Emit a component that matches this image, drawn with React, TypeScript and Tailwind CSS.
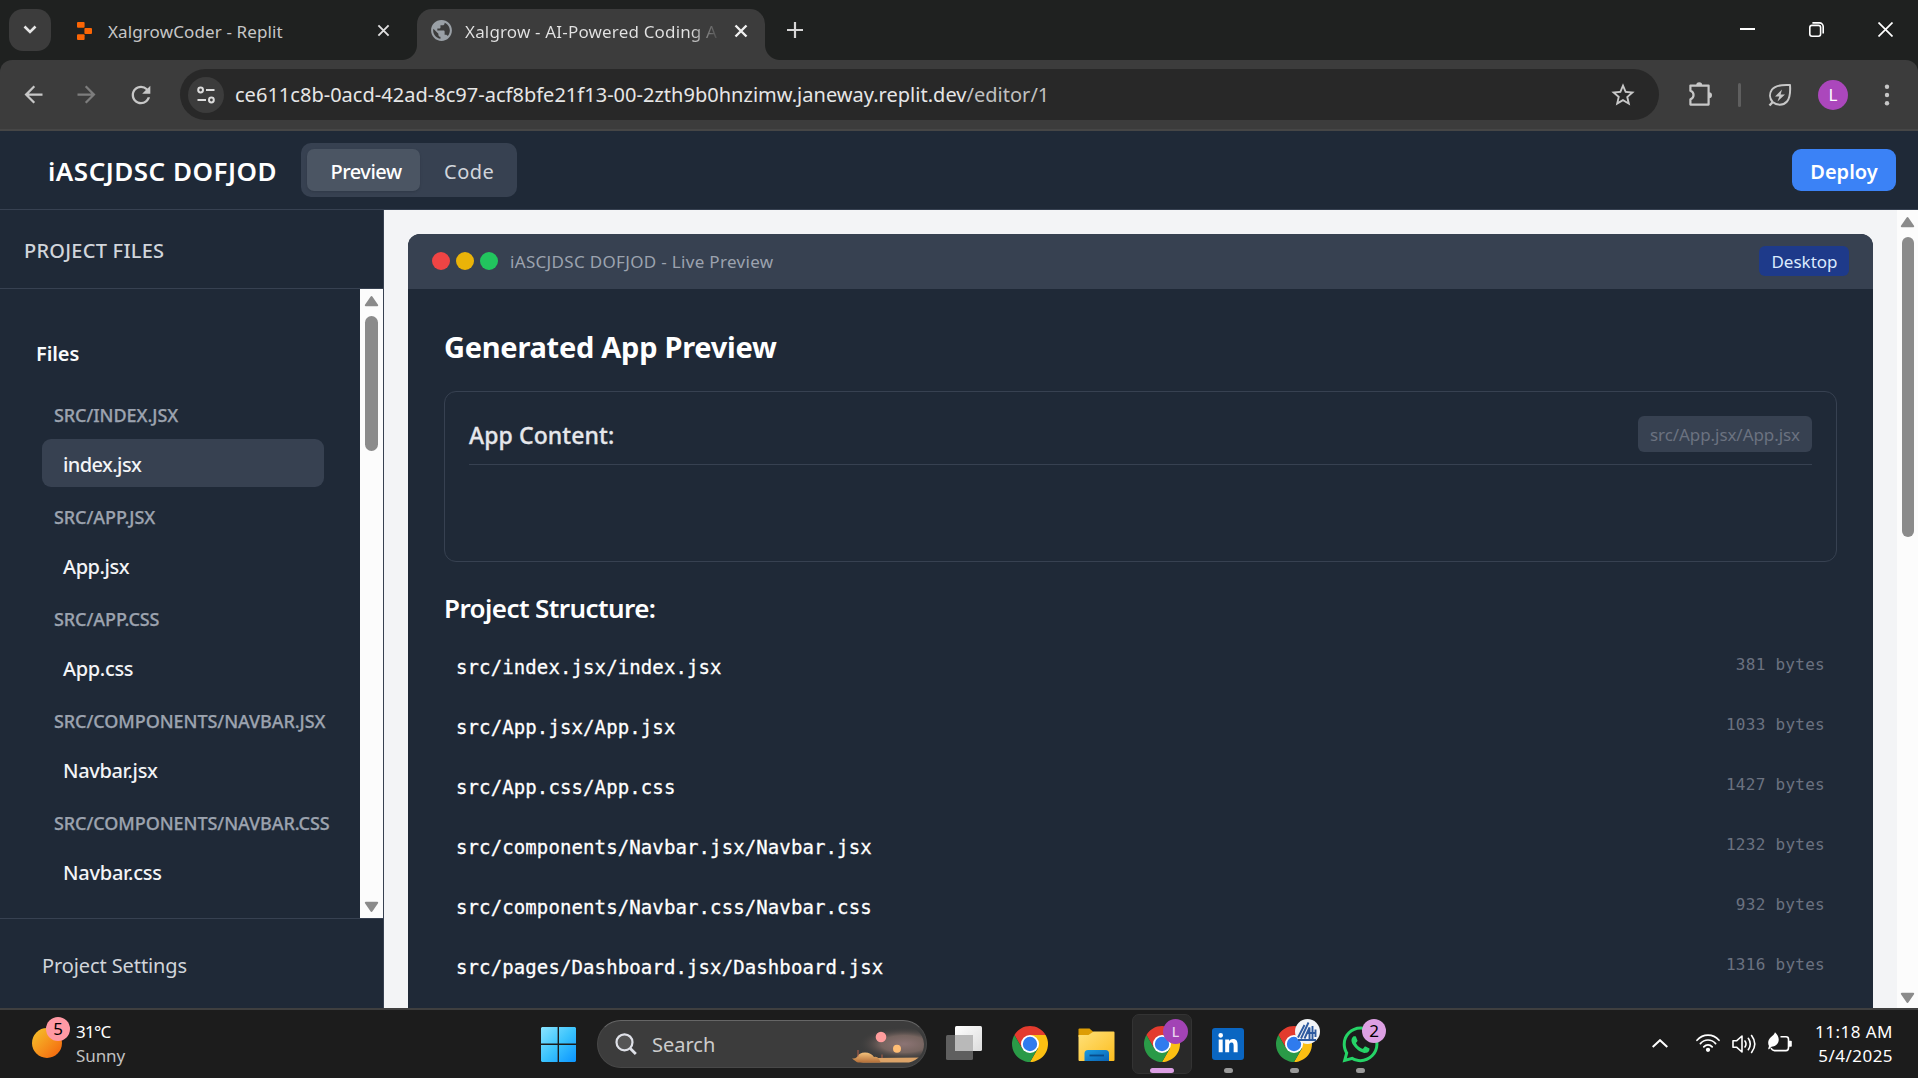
import React from "react";
import { MdArrowBack, MdArrowForward, MdPublic, MdRefresh, MdStarOutline } from "react-icons/md";
import { FaLinkedinIn, FaWhatsapp } from "react-icons/fa6";

const sidebarFiles = [
  { folder: "SRC/INDEX.JSX", name: "index.jsx", track: "tracking-[-0.6px]", active: true },
  { folder: "SRC/APP.JSX", name: "App.jsx", track: "tracking-[-0.45px]" },
  { folder: "SRC/APP.CSS", name: "App.css", track: "tracking-[-0.35px]" },
  { folder: "SRC/COMPONENTS/NAVBAR.JSX", name: "Navbar.jsx", track: "tracking-[-0.35px]" },
  { folder: "SRC/COMPONENTS/NAVBAR.CSS", name: "Navbar.css", track: "tracking-[-0.25px]" },
];

const structure = [
  ["src/index.jsx/index.jsx", "381 bytes"],
  ["src/App.jsx/App.jsx", "1033 bytes"],
  ["src/App.css/App.css", "1427 bytes"],
  ["src/components/Navbar.jsx/Navbar.jsx", "1232 bytes"],
  ["src/components/Navbar.css/Navbar.css", "932 bytes"],
  ["src/pages/Dashboard.jsx/Dashboard.jsx", "1316 bytes"],
];

function CloseIcon({ className }: { className?: string }) {
  return (
    <svg viewBox="0 0 14 14" className={className} fill="none" stroke="currentColor">
      <path d="M1.5 1.5 12.5 12.5M12.5 1.5 1.5 12.5" />
    </svg>
  );
}

function ScrollArrow({ down = false }: { down?: boolean }) {
  return (
    <svg viewBox="0 0 15 12" className={down ? "h-3 w-[15px] rotate-180" : "h-3 w-[15px]"}>
      <path d="M7.5 2 13.2 10.2H1.8Z" fill="#8b8b8b" stroke="#8b8b8b" strokeWidth="2" strokeLinejoin="round" />
    </svg>
  );
}

function ChromeLogo() {
  return (
    <svg viewBox="2 2 44 44" className="size-9">
      <path d="M4.95 13A22 22 0 0 1 43.05 13H24L14.47 29.5Z" fill="#e33b2e" />
      <path d="M43.05 13A22 22 0 0 1 24 46L33.53 29.5 24 13Z" fill="#fbbf12" />
      <path d="M24 46A22 22 0 0 1 4.95 13L14.47 29.5H33.53Z" fill="#2a9a47" />
      <circle cx="24" cy="24" r="11" fill="#fff" />
      <circle cx="24" cy="24" r="8.8" fill="#2f7bee" />
    </svg>
  );
}

function TabStrip() {
  return (
    <div className="flex h-[60px] shrink-0 bg-[#1f2120]">
      <button className="mt-[9px] ml-[9px] flex size-[42px] items-center justify-center rounded-[14px] bg-[#3c3c3c]">
        <svg viewBox="0 0 14 10" className="h-[10px] w-[14px]" fill="none" stroke="#e6e6e6" strokeWidth="2.6">
          <path d="M1.5 1.5 7 7 12.5 1.5" />
        </svg>
      </button>
      <div className="mt-[9px] ml-[26px] flex h-[43px] w-[325px] items-center text-[#c7c7c7]">
        <svg viewBox="0 0 15 18" className="h-[18px] w-[15px]" fill="#fb6505">
          <rect x="0" y="0" width="7.6" height="5.8" rx="1" />
          <rect x="7.4" y="6" width="7.6" height="6" rx="1" />
          <rect x="0" y="12.2" width="7.6" height="5.8" rx="1" />
        </svg>
        <span className="ml-4 w-[269px] pt-[2px] text-[17px] tracking-[0.12px]">XalgrowCoder - Replit</span>
        <CloseIcon className="size-[13px] stroke-2 text-[#e0e0e0]" />
      </div>
      <div className="mt-[45px] size-[15px] bg-[radial-gradient(circle_at_0_0,#1f2120_14.5px,#3c3c3c_15.5px)]" />
      <div className="mt-[9px] flex w-[348px] rounded-t-[15px] bg-[#3c3c3c] pl-[12px] text-[#e3e3e3]">
        <div className="flex h-[43px] items-center">
          <MdPublic className="size-[25px] text-[#9aa0a6]" />
          <span className="ml-[11px] w-[256px] overflow-hidden bg-gradient-to-r from-[#e3e3e3] from-[88%] to-[#3c3c3c] bg-clip-text pt-[2px] text-[17px] tracking-[0.17px] whitespace-nowrap text-transparent">
            Xalgrow - AI-Powered Coding A
          </span>
          <CloseIcon className="ml-[13px] size-[14px] stroke-[2.4] text-[#f0f0f0]" />
        </div>
      </div>
      <div className="mt-[45px] size-[15px] bg-[radial-gradient(circle_at_100%_0,#1f2120_14.5px,#3c3c3c_15.5px)]" />
      <svg viewBox="0 0 16 16" className="mt-[22px] ml-[7px] size-4" stroke="#d6d6d6" strokeWidth="2.2">
        <path d="M8 0V16M0 8H16" />
      </svg>
      <div className="mr-[25px] ml-auto flex h-[59px] items-center gap-[54px]">
        <svg viewBox="0 0 15 15" className="size-[15px]" stroke="#fff" strokeWidth="2">
          <path d="M0 7H15" />
        </svg>
        <svg viewBox="0 0 15 15" className="size-[15px]" fill="none" stroke="#fff" strokeWidth="1.6">
          <rect x="0.8" y="3.4" width="10.8" height="10.8" rx="2.2" />
          <path d="M3.4 .9H10.5A3.7 3.7 0 0 1 14.2 4.6V11.4" />
        </svg>
        <svg viewBox="0 0 15 15" className="size-[15px]" stroke="#fff" strokeWidth="1.7">
          <path d="M.5 .5 14.5 14.5M14.5 .5 .5 14.5" />
        </svg>
      </div>
    </div>
  );
}

function Toolbar() {
  return (
    <div className="bg-[#1f2120]">
      <div className="flex h-[71px] shrink-0 items-start rounded-t-[12px] border-b-2 border-[#464646] bg-[#3c3c3c] pt-[9px] text-[#c7c7c7]">
        <div className="flex h-[51px] w-[180px] items-center pl-5">
          <MdArrowBack className="size-[27px]" />
          <MdArrowForward className="ml-[26px] size-[27px] text-[#7d7d7d]" />
          <MdRefresh className="ml-[27px] size-[28px]" />
        </div>
        <div className="flex h-[51px] w-[1479px] items-center rounded-full bg-[#282828] pl-[8px]">
          <div className="flex size-9 items-center justify-center rounded-full bg-[#3c3c3c]">
            <svg viewBox="0 0 18 18" className="size-[18px]" fill="none" stroke="#dcdcdc" strokeWidth="2">
              <circle cx="3.6" cy="4" r="2.4" />
              <path d="M9 4H17.5M.5 14H9" />
              <circle cx="14.4" cy="14" r="2.4" />
            </svg>
          </div>
          <span className="ml-[11px] text-[20px] leading-[30px] tracking-[0.02px] text-[#e6e6e6]">
            ce611c8b-0acd-42ad-8c97-acf8bfe21f13-00-2zth9b0hnzimw.janeway.replit.dev
            <span className="text-[#c0c0c0]">/editor/1</span>
          </span>
          <MdStarOutline className="mr-[22px] ml-auto size-[28px]" />
        </div>
        <div className="flex h-[51px] flex-1 items-center pl-[29px]">
          <svg viewBox="0 0 26 26" className="mb-[2px] size-[26px]" fill="none" stroke="#c7c7c7" strokeWidth="2.2" strokeLinejoin="round">
            <path d="M2.4 4.6H20.6V23.6H2.4V18.4C6.6 16.9 6.6 11.3 2.4 9.8Z" />
            <path d="M8.2 4.2A3 3 0 0 1 14.2 4.2ZM21 11.2A3 3 0 0 1 21 17.2Z" fill="#c7c7c7" stroke="none" />
          </svg>
          <div className="ml-[24px] h-6 w-[3px] rounded-full bg-[#5f5f5f]" />
          <svg viewBox="0 0 24 24" className="ml-[27px] size-6" fill="none" stroke="#c7c7c7" strokeWidth="2" strokeLinejoin="round">
            <path d="M22 2C13 1.500 7 2.500 4 6.500 1.200 10.500 1.500 15.500 4.600 19 8.500 22.500 15 23 19 18.500 22 15 22.500 9 22 2Z" />
            <path d="M4.800 19 1.500 22.500" strokeWidth="2.400" />
            <path d="M14 6.500 7 13.400H11.300L9.500 18.500 17 11.400H12.600Z" fill="#c7c7c7" stroke="none" />
          </svg>
          <div className="ml-[26px] flex size-[30px] items-center justify-center rounded-full bg-[#ab47bc] text-[17px] text-white">L</div>
          <svg viewBox="0 0 6 24" className="ml-[36px] h-6 w-[6px]" fill="#c7c7c7">
            <circle cx="3" cy="3.800" r="2.200" />
            <circle cx="3" cy="12" r="2.200" />
            <circle cx="3" cy="20.200" r="2.200" />
          </svg>
        </div>
      </div>
    </div>
  );
}

function AppHeader() {
  return (
    <header className="flex h-[79px] shrink-0 items-center border-b border-[#374151] bg-[#1f2937] pr-[22px] pl-[48px]">
      <h1 className="w-[253px] pt-[3px] text-[26px] font-semibold tracking-[0.5px] whitespace-nowrap text-white">iASCJDSC DOFJOD</h1>
      <div className="flex h-[54px] w-[216px] items-center rounded-[10px] bg-[#374151] pl-[6px] text-[20px]">
        <button className="flex h-[42px] w-[113px] items-center justify-center rounded-[7px] bg-[#4b5563] pt-[3px] pl-[5px] font-medium tracking-[-0.48px] text-white shadow-sm">
          Preview
        </button>
        <button className="ml-6 pt-[3px] tracking-[0.5px] text-[#d1d5db]">Code</button>
      </div>
      <button className="ml-auto flex h-[42px] w-[104px] items-center justify-center rounded-[9px] bg-[#3b82f6] pt-[3px] text-[20px] font-semibold text-white">
        Deploy
      </button>
    </header>
  );
}

function Sidebar() {
  return (
    <aside className="flex w-[384px] shrink-0 flex-col border-r border-[#374151] bg-[#1f2937]">
      <div className="flex h-[79px] shrink-0 items-center border-b border-[#374151] pt-[3px] pl-6 text-[20px] font-medium tracking-[0.25px] text-[#d1d5db]">
        PROJECT FILES
      </div>
      <div className="flex min-h-0 flex-1">
        <div className="flex-1 pt-[50px]">
          <h2 className="pl-[36px] text-[20px] leading-[30px] font-semibold tracking-[-0.1px] text-[#f9fafb]">Files</h2>
          <ul className="mt-[33px] pl-[42px]">
            {sidebarFiles.map((f) => (
              <li key={f.folder} className="mb-[17px]">
                <div className="h-[37px] pl-3 text-[18px] leading-[27px] font-medium tracking-[-0.08px] whitespace-nowrap text-[#9ca3af] [-webkit-text-stroke:0.25px]">
                  {f.folder}
                </div>
                <div
                  className={
                    f.active
                      ? "flex h-12 w-[282px] items-center rounded-[9px] bg-[#374151] pt-[3px] pl-[21px]"
                      : "flex h-12 w-[282px] items-center pt-[3px] pl-[21px]"
                  }
                >
                  <span className={`text-[20px] font-medium text-[#f3f4f6] ${f.track}`}>{f.name}</span>
                </div>
              </li>
            ))}
          </ul>
        </div>
        <div className="flex w-[23px] flex-col items-center bg-[#fcfcfc] pt-[6px] pb-[5px]">
          <ScrollArrow />
          <div className="mt-[9px] h-[135px] w-[13px] rounded-full bg-[#8b8b8b]" />
          <div className="mt-auto">
            <ScrollArrow down />
          </div>
        </div>
      </div>
      <div className="flex h-[90px] shrink-0 items-center border-t border-[#374151] pt-1 pl-[42px] text-[20px] tracking-[-0.1px] text-[#d1d5db]">
        Project Settings
      </div>
    </aside>
  );
}

function PreviewPane() {
  return (
    <main className="flex min-w-0 flex-1 bg-[#f3f4f6]">
      <div className="flex min-w-0 flex-1 overflow-hidden px-6 pt-6">
        <section className="flex min-w-0 flex-1 flex-col overflow-hidden rounded-t-[12px] bg-[#1f2937]">
          <div className="flex h-[55px] shrink-0 items-center bg-[#374151] px-6">
            <div className="flex gap-[6px] pb-[2px]">
              <span className="size-[18px] rounded-full bg-[#ef4444]" />
              <span className="size-[18px] rounded-full bg-[#eab308]" />
              <span className="size-[18px] rounded-full bg-[#22c55e]" />
            </div>
            <span className="ml-3 text-[17px] tracking-[0.32px] text-[#9ca3af]">iASCJDSC DOFJOD - Live Preview</span>
            <span className="mb-px ml-auto flex h-[30px] w-[90px] items-center justify-center rounded-[6px] bg-[#1e3a8a] pt-px pl-px text-[17px] text-[#dbeafe]">
              Desktop
            </span>
          </div>
          <div className="flex-1 px-9 pt-[37px]">
            <h2 className="text-[29px] leading-[42px] font-bold tracking-[-0.27px] text-white">Generated App Preview</h2>
            <div className="mt-[23px] h-[171px] rounded-[12px] border border-[#374151] px-6 pt-6">
              <div className="flex h-[49px] items-start justify-between border-b border-[#374151]">
                <h3 className="text-[23px] leading-[38px] font-medium tracking-[0.1px] text-[#e5e7eb] [-webkit-text-stroke:0.3px]">App Content:</h3>
                <span className="flex h-9 w-[174px] items-center justify-center rounded-[6px] bg-[#374151] pt-px text-[17px] tracking-[-0.07px] text-[#6b7280]">
                  src/App.jsx/App.jsx
                </span>
              </div>
            </div>
            <h3 className="mt-[26px] text-[26px] leading-10 font-semibold tracking-[-0.58px] text-white">Project Structure:</h3>
            <ul className="mt-[9px] font-['DejaVu_Sans_Mono',monospace]">
              {structure.map(([path, size]) => (
                <li key={path} className="flex h-[60px] items-center justify-between px-3">
                  <span className="text-[19px] tracking-[0.11px] text-white [-webkit-text-stroke:0.3px]">{path}</span>
                  <span className="pb-1 text-[16px] tracking-[0.27px] text-[#6b7280]">{size}</span>
                </li>
              ))}
            </ul>
          </div>
        </section>
      </div>
      <div className="flex w-[21px] shrink-0 flex-col items-center bg-[#fcfcfc] pt-[6px] pb-[4px]">
        <ScrollArrow />
        <div className="mt-[9px] h-[300px] w-3 rounded-full bg-[#8b8b8b]" />
        <div className="mt-auto">
          <ScrollArrow down />
        </div>
      </div>
    </main>
  );
}

function SearchArt() {
  return (
    <svg viewBox="0 0 78 38" className="h-[38px] w-[78px]">
      <defs>
        <radialGradient id="haze" cx="0.62" cy="0.5" r="0.5">
          <stop offset="0" stopColor="#8c7474" />
          <stop offset="0.5" stopColor="#75645f" />
          <stop offset="1" stopColor="#3c3c3c" stopOpacity="0" />
        </radialGradient>
        <linearGradient id="sand" x1="0" y1="0" x2="0" y2="1">
          <stop offset="0" stopColor="#f4c27c" />
          <stop offset="1" stopColor="#b06a35" />
        </linearGradient>
        <clipPath id="pill">
          <path d="M0 0H56A19 19 0 0 1 77 18C77 28 71 34 62 36.500H0Z" />
        </clipPath>
      </defs>
      <g clipPath="url(#pill)">
        <ellipse cx="46" cy="18" rx="46" ry="17" fill="url(#haze)" />
        <path d="M28 32 78 31.500V38H10Z" fill="#dca368" />
        <path d="M5 32.500Q8 33 10 31 12 26.500 18 26.500 24 26.500 27 31 30 30 32 33L34 37H11Z" fill="url(#sand)" />
        <path d="M11 24V30.500M35 28.500V32" stroke="#b5634a" strokeWidth="1" />
        <circle cx="34" cy="11" r="5.300" fill="#ff9d9d" />
        <circle cx="50" cy="22.800" r="4" fill="#ffbd74" />
      </g>
    </svg>
  );
}

function TaskTile({ children, running, active }: { children: React.ReactNode; running?: boolean; active?: boolean }) {
  return (
    <div className="flex h-[68px] w-[66px] flex-col items-center pt-1">
      <div
        className={
          active
            ? "flex h-[60px] w-[60px] flex-col items-center rounded-[7px] border border-[#333333] bg-[#292929] pt-[11px]"
            : "flex h-[60px] w-[60px] flex-col items-center pt-3"
        }
      >
        <div className="relative flex size-9 items-center justify-center">{children}</div>
        {active && <div className="mt-[6px] h-[5px] w-6 shrink-0 rounded-full bg-[#dc9fe4]" />}
        {running && <div className="mt-[6px] h-[5px] w-[9px] shrink-0 rounded-full bg-[#9a9a9a]" />}
      </div>
    </div>
  );
}

function Taskbar() {
  return (
    <footer className="flex h-[70px] shrink-0 border-t-2 border-[#3f3f3f] bg-[#1c1c1c]">
      <div className="flex w-[541px] pl-8">
        <div className="relative mt-[18px] size-[30px] rounded-full bg-gradient-to-br from-[#f3c42c] to-[#f25c0a]">
          <span className="absolute -top-[11px] left-[14px] flex size-6 items-center justify-center rounded-full bg-[#ff99a4] text-[17px] text-black">
            5
          </span>
        </div>
        <div className="ml-[14px] pt-[10px] text-[17px] leading-6">
          <div className="tracking-[-0.7px] text-white">31°C</div>
          <div className="tracking-[-0.1px] text-[#c2c2c2]">Sunny</div>
        </div>
      </div>
      <svg viewBox="0 0 35 35" className="mt-[17px] size-[35px]">
        <defs>
          <linearGradient id="win" x1="0" y1="0" x2="1" y2="1">
            <stop offset="0" stopColor="#8be4ff" />
            <stop offset="0.5" stopColor="#3cc4fd" />
            <stop offset="1" stopColor="#0a94ff" />
          </linearGradient>
        </defs>
        <path d="M1 0H16.600V16.600H0V1ZM18 0H34L35 1V16.600H18ZM0 18H16.600V35H1L0 34ZM18 18H35V34L34 35H18Z" fill="url(#win)" />
      </svg>
      <div className="mt-[10px] ml-[21px] flex h-12 w-[330px] items-center rounded-full border border-[#484848] border-t-[#666666] bg-[#3c3c3c] pl-[17px]">
        <svg viewBox="0 0 22 22" className="size-[22px]" fill="none" stroke="#dfe1e8">
          <circle cx="9.500" cy="9.300" r="8" strokeWidth="2.200" fill="#555" />
          <path d="M15.300 15.500 20.800 21" strokeWidth="2.800" />
        </svg>
        <span className="ml-[15px] pt-px text-[20px] text-[#cccccc]">Search</span>
        <span className="mt-[2px] mr-px ml-auto">
          <SearchArt />
        </span>
      </div>
      <div className="ml-1 flex">
        <TaskTile>
          <svg viewBox="0 0 36 34" className="mb-[2px] h-[34px] w-9 shrink-0">
            <defs>
              <linearGradient id="front" x1="0" y1="0" x2="1" y2="1">
                <stop offset="0" stopColor="#ffffff" />
                <stop offset="1" stopColor="#dcdcdc" />
              </linearGradient>
            </defs>
            <rect x="0" y="9" width="27" height="25" rx="1.500" fill="#5f5f5f" />
            <rect x="9" y="0" width="27" height="25" rx="1.500" fill="url(#front)" />
            <path d="M9 9H27V25H9Z" fill="#b9b9b9" />
          </svg>
        </TaskTile>
        <TaskTile>
          <ChromeLogo />
        </TaskTile>
        <TaskTile>
          <svg viewBox="0 0 37 33" className="h-[33px] w-[37px] shrink-0">
            <defs>
              <linearGradient id="folder" x1="0" y1="0" x2="1" y2="1">
                <stop offset="0" stopColor="#ffe17a" />
                <stop offset="1" stopColor="#fcbd1e" />
              </linearGradient>
              <linearGradient id="tray" x1="0" y1="0" x2="1" y2="1">
                <stop offset="0" stopColor="#1a9be0" />
                <stop offset="1" stopColor="#0a62b4" />
              </linearGradient>
            </defs>
            <path d="M.5 1.500Q.5 .5 1.500 .5H11.500L15.500 4V9H.5Z" fill="#dd9d05" />
            <path d="M.5 7H10.500L15.500 3.500H35.500Q36.500 3.500 36.500 4.500V32Q36.500 33 35.500 33H1.500Q.5 33 .5 32Z" fill="url(#folder)" />
            <path d="M6.500 33V25.500Q6.500 22 10 22H27.500Q31 22 31 25.500V33Z" fill="url(#tray)" />
            <path d="M11.500 27.500H26" stroke="#084b8a" strokeWidth="1.800" />
          </svg>
        </TaskTile>
        <TaskTile active>
          <ChromeLogo />
          <span className="absolute -top-[7px] left-[19px] flex size-[25px] items-center justify-center rounded-full bg-[#a243b5] text-[14px] font-medium text-[#e9d3ee]">
            L
          </span>
        </TaskTile>
        <TaskTile running>
          <div className="flex size-8 items-center justify-center rounded-[3px] bg-[#0a66c2]">
            <FaLinkedinIn className="size-[22px] text-white" />
          </div>
        </TaskTile>
        <TaskTile running>
          <ChromeLogo />
          <svg viewBox="0 0 25 25" className="absolute -top-[7px] left-[19px] size-[25px]">
            <circle cx="12.500" cy="12.500" r="12.500" fill="#f2f4f7" />
            <path
              d="M3 18.500 9.500 6M6 19.500 13.500 3.500M9.500 19.500 14.500 8.500V20M12 14H20.500M17.500 7V20M20.500 10.500V18M3 21H21"
              fill="none"
              stroke="#2c5aa0"
              strokeWidth="1.900"
            />
          </svg>
        </TaskTile>
        <TaskTile running>
          <FaWhatsapp className="size-[41px] shrink-0 text-[#25d366]" />
          <span className="absolute -top-[7px] left-5 flex size-6 items-center justify-center rounded-full bg-[#dda0e3] text-[17px] text-black">
            2
          </span>
        </TaskTile>
      </div>
      <div className="mr-[25px] ml-auto flex text-white">
        <svg viewBox="0 0 16 9" className="mt-[29px] h-[9px] w-4" fill="none" stroke="#fff" strokeWidth="2">
          <path d="M.7 8 8 1.200 15.300 8" />
        </svg>
        <svg viewBox="0 0 24 18" className="mt-[24px] ml-[28px] h-[18px] w-6" fill="none" stroke="#fff" strokeWidth="1.700" strokeLinecap="round">
          <path d="M1 6.300C7 -.6 17 -.6 23 6.300M4.400 9.600C8.600 4.800 15.400 4.800 19.600 9.600M7.800 12.800C10.200 10.200 13.800 10.200 16.200 12.800" />
          <circle cx="12" cy="15.800" r="1.300" fill="#fff" />
        </svg>
        <svg viewBox="0 0 24 20" className="mt-[24px] ml-3 h-5 w-6" fill="none" stroke="#fff" strokeWidth="1.600" strokeLinecap="round" strokeLinejoin="round">
          <path d="M1 6.800H4.500L10 2V18L4.500 13.200H1Z" />
          <path d="M13 7Q15 10 13 13M16.300 4.300Q20.200 10 16.300 15.700M19.600 1.500Q26 10 19.600 18.500" />
        </svg>
        <svg viewBox="0 0 24 20" className="mt-[22px] ml-3 h-5 w-6" fill="none" stroke="#fff" strokeWidth="1.600" strokeLinejoin="round">
          <path d="M12.500 4.800H18Q20.500 4.800 20.500 7.300V15.800Q20.500 18.600 18 18.600H6.500Q4.200 18.600 3 16" />
          <path d="M21 9.500H23V14H21Z" fill="#fff" />
          <path d="M7 .3C9.800 3 11.200 6 10.600 9 10 12.500 7 14.500 3.500 14.800L.8 17.500 .2 16.500 1 14C-.6 11 .2 7.500 2.800 5.200 4.800 3.500 6.300 2.500 7 .3Z" fill="#fff" stroke="none" />
        </svg>
        <div className="ml-[23px] w-[78px] pt-[10px] text-right text-[17px] leading-6 whitespace-nowrap">
          <div className="tracking-[0.47px]">11:18 AM</div>
          <div className="tracking-[0.46px]">5/4/2025</div>
        </div>
      </div>
    </footer>
  );
}

export default function App() {
  return (
    <div className="flex h-[1078px] w-[1918px] flex-col overflow-hidden font-['Noto_Sans','Open_Sans',sans-serif]">
      <TabStrip />
      <Toolbar />
      <AppHeader />
      <div className="flex min-h-0 flex-1">
        <Sidebar />
        <PreviewPane />
      </div>
      <Taskbar />
    </div>
  );
}
